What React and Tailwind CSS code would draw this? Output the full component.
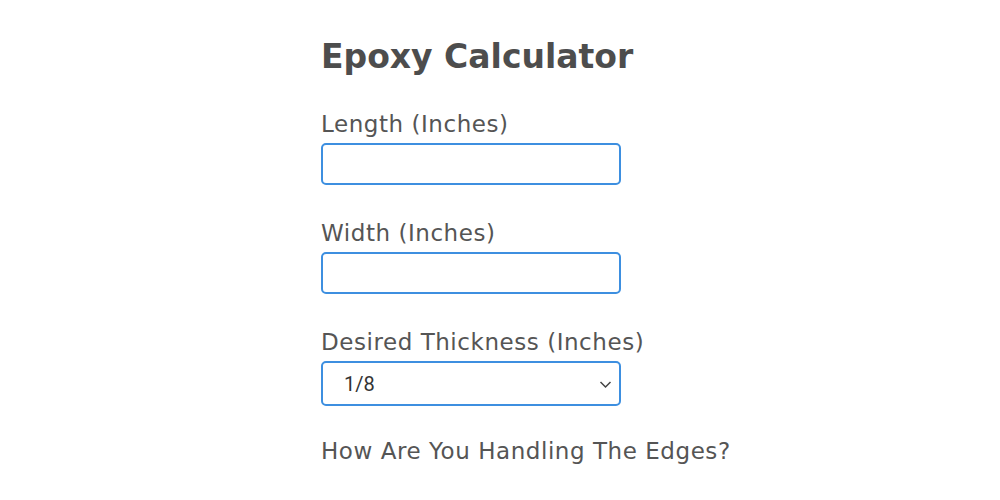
import React from "react";

const font = { fontFamily: '"DejaVu Sans", sans-serif' };

function Field({ label, children, mb }) {
  return (
    <div className={mb}>
      <label className="block text-[23px] leading-[30px] text-[#555555] tracking-[0.55px] whitespace-nowrap">{label}</label>
      <div className="mt-[4px]">{children}</div>
    </div>
  );
}

export default function App() {
  return (
    <div className="w-[1000px] h-[500px] bg-white overflow-hidden" style={font}>
      <div className="ml-[321px] pt-[35px] w-[300px]">
        <h1 className="text-[33px] leading-[44px] font-bold text-[#4d4d4d] whitespace-nowrap">Epoxy Calculator</h1>
        <div className="mt-[30px]">
          <Field label="Length (Inches)" mb="mb-[33px]">
            <input type="text" className="block w-[300px] h-[42px] rounded-[5px] border-2 border-[#3d8fe0] outline-none px-3" />
          </Field>
          <Field label="Width (Inches)" mb="mb-[33px]">
            <input type="text" className="block w-[300px] h-[42px] rounded-[5px] border-2 border-[#3d8fe0] outline-none px-3" />
          </Field>
          <Field label="Desired Thickness (Inches)" mb="mb-[30px]">
            <div className="relative w-[300px] h-[45px] rounded-[5px] border-2 border-[#3d8fe0] flex items-center">
              <span className="ml-[21px] text-[20px] text-[#333333]" style={{ fontFamily: 'Roboto, sans-serif' }}>1/8</span>
              <svg className="absolute right-[7px] top-[16px]" width="13" height="10" viewBox="0 0 13 10" fill="none">
                <path d="M1.5 3 L6.5 8 L11.5 3" stroke="#444" strokeWidth="1.5" />
              </svg>
            </div>
          </Field>
          <div className="text-[23px] leading-[30px] text-[#555555] tracking-[0.55px] whitespace-nowrap">How Are You Handling The Edges?</div>
        </div>
      </div>
    </div>
  );
}
